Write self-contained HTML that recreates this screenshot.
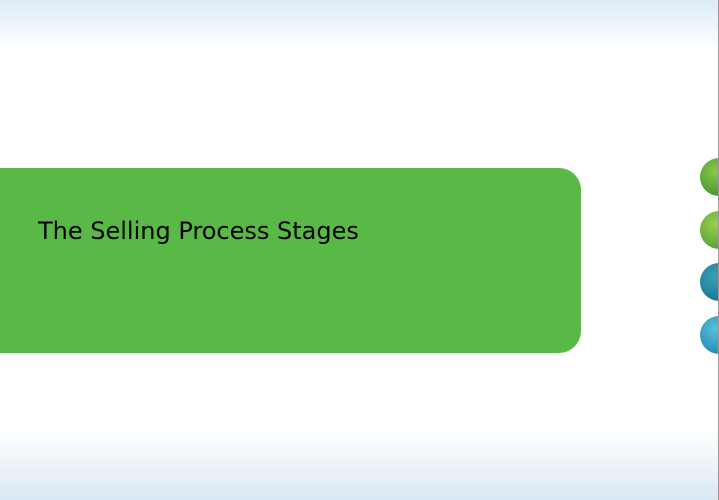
<!DOCTYPE html>
<html><head><style>
html,body{margin:0;padding:0}
body{width:719px;height:500px;position:relative;overflow:hidden;background:#fff}
.top{position:absolute;left:0;top:0;width:719px;height:50px;background:linear-gradient(#dcebf6,#fff)}
.bot{position:absolute;left:0;top:430px;width:719px;height:70px;background:linear-gradient(#fff,#d9e8f3)}
.box{position:absolute;left:-30px;top:168px;width:611px;height:185px;background:#5ab946;border-radius:22px}
.t{position:absolute;left:38px;top:217px;font:24px "DejaVu Sans",sans-serif;color:#000;white-space:nowrap}
.c{position:absolute;left:700px;width:38px;height:38px;border-radius:50%}
.line{position:absolute;left:718px;top:0;width:1px;height:500px;background:#999}
</style></head><body>
<div class="top"></div><div class="bot"></div>
<div class="box"></div>
<div class="t">The Selling Process Stages</div>
<div class="c" style="top:158px;background:radial-gradient(circle at 40% 35%,#8cc84a,#4a9a30 70%,#2f7a25)"></div>
<div class="c" style="top:211px;background:radial-gradient(circle at 40% 35%,#9ccf50,#5aa535 70%,#387f28)"></div>
<div class="c" style="top:263px;background:radial-gradient(circle at 40% 35%,#3aa0b0,#1e7aa0 70%,#1a5f86)"></div>
<div class="c" style="top:316px;background:radial-gradient(circle at 40% 35%,#5ac0d8,#2590b8 70%,#1a6c90)"></div>
<div class="line"></div>
</body></html>
